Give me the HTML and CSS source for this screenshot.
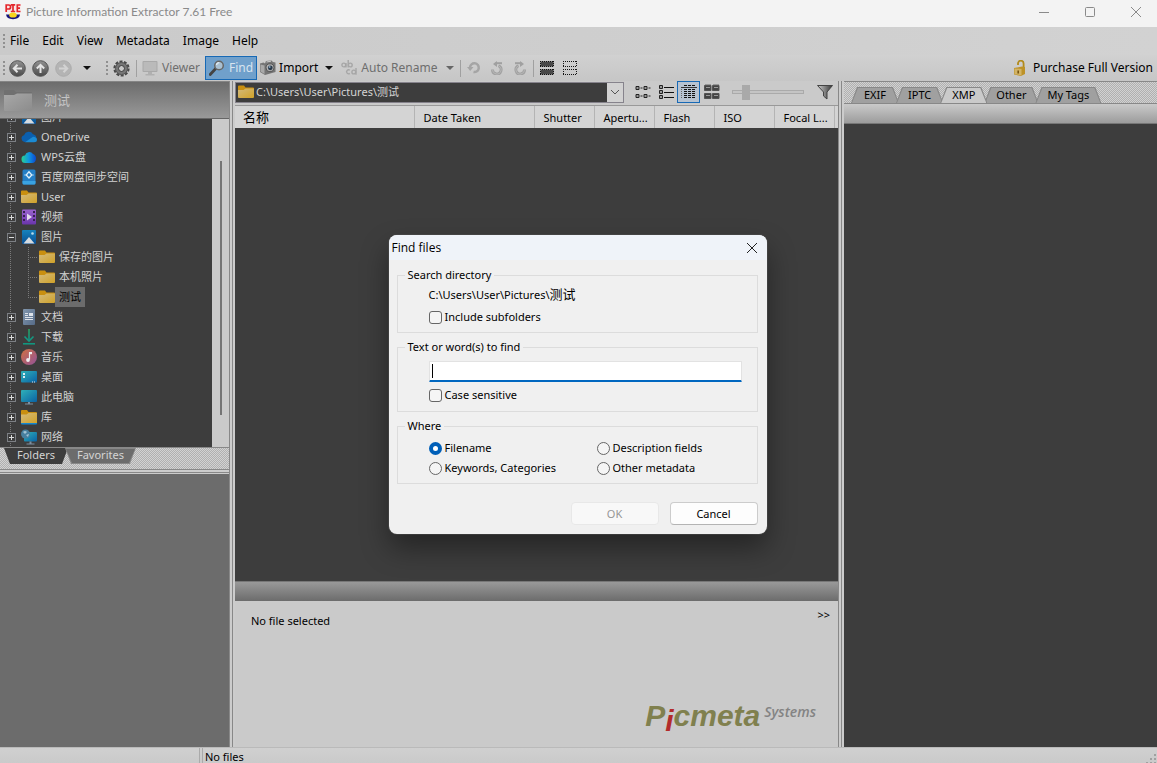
FILE: index.html
```html
<!DOCTYPE html>
<html lang="en">
<head>
<meta charset="utf-8">
<title>Picture Information Extractor</title>
<link rel="stylesheet" href="styles.css">
</head>
<body>
<svg class="defs" width="0" height="0" aria-hidden="true">
  <defs>
    <linearGradient id="gFolder" x1="0" y1="0" x2="1" y2="1"><stop offset="0" stop-color="#d3ba7c"/><stop offset="1" stop-color="#d1a228"/></linearGradient>
    <linearGradient id="gGrey" x1="0" y1="0" x2="1" y2="1"><stop offset="0" stop-color="#a8a8a8"/><stop offset="1" stop-color="#8c8c8c"/></linearGradient>
    <linearGradient id="gScreen" x1="0" y1="0" x2="1" y2="1"><stop offset="0" stop-color="#2fb0b8"/><stop offset="1" stop-color="#0a62a5"/></linearGradient>
    <linearGradient id="gPic" x1="0" y1="0" x2="0" y2="1"><stop offset="0" stop-color="#1683bd"/><stop offset="1" stop-color="#0a4f93"/></linearGradient>
    <linearGradient id="gVid" x1="0" y1="0" x2="0" y2="1"><stop offset="0" stop-color="#9a63cf"/><stop offset="1" stop-color="#6a35ac"/></linearGradient>
    <linearGradient id="gMus" x1="0" y1="0" x2="1" y2="1"><stop offset="0" stop-color="#d1713f"/><stop offset="1" stop-color="#92529a"/></linearGradient>
    <linearGradient id="gDoc" x1="0" y1="0" x2="1" y2="1"><stop offset="0" stop-color="#8297ae"/><stop offset="1" stop-color="#566b88"/></linearGradient>
    <linearGradient id="gDl" x1="0" y1="0" x2="0" y2="1"><stop offset="0" stop-color="#2ba35f"/><stop offset="1" stop-color="#0e9387"/></linearGradient>
    <linearGradient id="gWps" x1="0" y1="0" x2="1" y2="0"><stop offset="0" stop-color="#29d192"/><stop offset=".5" stop-color="#1097e0"/><stop offset="1" stop-color="#0b48cf"/></linearGradient>
    <linearGradient id="gBall" x1="0" y1="0" x2="0" y2="1"><stop offset="0" stop-color="#929292"/><stop offset="1" stop-color="#4a4a4a"/></linearGradient>
    <linearGradient id="gFun" x1="0" y1="0" x2="1" y2="0"><stop offset="0" stop-color="#d0d0d0"/><stop offset="1" stop-color="#333"/></linearGradient>
    <symbol id="folder" viewBox="0 0 16 16"><path d="M0 2.500Q0 1.500 1 1.500h5l1.500 2H15q1 0 1 1V9H0z" fill="#c98f10"/><path d="M0 6h5.500l2-1.500H16V13q0 1-1 1H1q-1 0-1-1z" fill="url(#gFolder)"/></symbol>
    <symbol id="pictures" viewBox="0 0 16 16"><rect x="1" y="1" width="14" height="14" rx="1" fill="url(#gPic)"/><path d="M2.500 14.500L8 8l5.500 6.500z" fill="#d6dbe0"/><circle cx="11.500" cy="4.500" r="1.300" fill="#b9dcea"/></symbol>
    <symbol id="plus" viewBox="0 0 9 9"><rect x=".5" y=".5" width="8" height="8" fill="#3d3d3d" stroke="#7c7f84"/><path d="M2 4.500h5M4.500 2v5" stroke="#dcdcdc"/></symbol>
    <symbol id="minus" viewBox="0 0 9 9"><rect x=".5" y=".5" width="8" height="8" fill="#3d3d3d" stroke="#7c7f84"/><path d="M2 4.500h5" stroke="#dcdcdc"/></symbol>
    <symbol id="rotate" viewBox="0 0 14 14"><path d="M2.500 8.500A4.300 4.300 0 1 0 8.500 4.800" fill="none" stroke="#a0a0a0" stroke-width="2.800"/><path d="M2.500 8.500A4.300 4.300 0 1 0 8.500 4.800" fill="none" stroke="#b8b8b8"/><path d="M5.500 2.200H12" stroke="#a0a0a0" stroke-width="2"/><path d="M7 0v6L3 3z" fill="#a0a0a0"/></symbol>
  </defs>
</svg>

<header class="titlebar">
  <svg class="app-logo" viewBox="0 0 16 16"><rect width="16" height="8" y="0" fill="#f8e8e8"/><path d="M1.200 8V1h2.400a2 2 0 0 1 0 4H1.500M8 0v8M5.800.8h4.400M5.800 7.500h4.400M15.500 1h-3.200v6.500h3.200M12 4.200h3" fill="none" stroke="#e3262b" stroke-width="1.700"/><path d="M1 10.500h14q-.5 4.500-7 4.700Q1.500 15 1 10.500z" fill="#14147c"/><ellipse cx="8" cy="11" rx="3.800" ry="2.600" fill="#f7d51c"/></svg>
  <h1>Picture Information Extractor 7.61 Free</h1>
  <div class="window-buttons">
    <button aria-label="Minimize"><svg viewBox="0 0 12 12"><path d="M1 6.500h10"/></svg></button>
    <button aria-label="Maximize"><svg viewBox="0 0 12 12"><rect x="1.500" y="1.500" width="9" height="9" rx="1"/></svg></button>
    <button aria-label="Close"><svg viewBox="0 0 12 12"><path d="M1 1l10 10M11 1L1 11"/></svg></button>
  </div>
</header>

<nav class="menubar"><span class="grip"></span>
  <button>File</button><button>Edit</button><button>View</button><button>Metadata</button><button>Image</button><button>Help</button>
</nav>

<div class="toolbar">
  <div class="band nav-band"><span class="grip"></span>
    <button aria-label="Back"><svg class="i17" viewBox="0 0 17 17"><circle cx="8.500" cy="8.500" r="7.800" fill="url(#gBall)" stroke="#555"/><path d="M13 8.500H5M8.500 4.800L4.800 8.500l3.700 3.700" fill="none" stroke="#e4e4e4" stroke-width="2"/></svg></button>
    <button aria-label="Up"><svg class="i17" viewBox="0 0 17 17"><circle cx="8.500" cy="8.500" r="7.800" fill="url(#gBall)" stroke="#555"/><path d="M8.500 13V5M4.800 8.500l3.700-3.700 3.700 3.700" fill="none" stroke="#e4e4e4" stroke-width="2"/></svg></button>
    <button aria-label="Forward" disabled><svg class="i17" viewBox="0 0 17 17"><circle cx="8.500" cy="8.500" r="7.800" fill="#b4b4b4" stroke="#acacac"/><path d="M4 8.500h8M8.500 4.800l3.700 3.700-3.700 3.700" fill="none" stroke="#d2d2d2" stroke-width="2"/></svg></button>
    <button aria-label="History"><span class="caret"></span></button>
  </div>
  <div class="band"><span class="grip"></span>
    <button class="gear" aria-label="Options"><svg class="i17" viewBox="0 0 17 17"><circle cx="8.500" cy="8.500" r="6.900" fill="none" stroke="#484848" stroke-width="2.400" stroke-dasharray="2.900 1.440"/><circle cx="8.500" cy="8.500" r="4.700" fill="none" stroke="#777" stroke-width="3.200"/><circle cx="8.500" cy="8.500" r="6" fill="none" stroke="#555"/><circle cx="8.500" cy="8.500" r="3" fill="#c8c8c8" stroke="#333"/></svg></button>
    <span class="sep"></span>
    <button class="tool viewer" disabled><svg class="i16" viewBox="0 0 16 16"><rect x=".5" y="1" width="15" height="11" rx="1" fill="#a9a9a9"/><rect x="1.500" y="2" width="13" height="9" fill="#bababa"/><path d="M6 12h4v2h2.500v1.500h-9V14H6z" fill="#b0b0b0"/></svg>Viewer</button>
    <button class="tool find"><svg class="i16" viewBox="0 0 16 16"><path d="M1.200 14.500L7 8.200" stroke="#444" stroke-width="2.800" stroke-linecap="round"/><circle cx="10" cy="5.500" r="4.300" fill="#a9c0d2" stroke="#666" stroke-width="1.500"/><path d="M7.500 5a2.800 2.800 0 0 1 2.800-2.300" fill="none" stroke="#e4edf4" stroke-width="1.200"/></svg>Find</button>
    <button class="tool import"><svg class="i16" viewBox="0 0 16 16"><path d="M0 3.500l3.500-1L5 3.500l1-2.500 5.500-.5L13 2l2.500.5V12L5 15l-5-3z" fill="#757575"/><path d="M.5 4.500v7l4 2.500V5.500z" fill="#a9a9a9"/><path d="M6.500 2l4.500-.8" stroke="#ccc"/><circle cx="10" cy="7.800" r="4" fill="#b4b4b4" stroke="#555"/><circle cx="10.300" cy="7.800" r="2.400" fill="#2a3a4b"/><circle cx="9.600" cy="7" r="1" fill="#83a0ba"/></svg>Import<span class="caret"></span></button>
    <button class="tool rename" disabled><svg class="i16" viewBox="0 0 16 16" fill="none" stroke="#a6a6a6" stroke-width="1.400"><circle cx="2.800" cy="5" r="1.900"/><path d="M5 3v4.500M7.200 0v7.500"/><circle cx="9.300" cy="5" r="1.900"/><path d="M8.800 10.200a2 2 0 1 0 0 3.200M15 8v6.800"/><circle cx="12.800" cy="12" r="1.900"/></svg>Auto Rename<span class="caret dim"></span></button>
    <span class="sep spaced"></span>
    <button class="sq" aria-label="Refresh" disabled><svg class="i14" viewBox="0 0 14 14"><path d="M3 6.500A4.400 4.400 0 1 1 6.500 11" fill="none" stroke="#a5a5a5" stroke-width="2.500"/><path d="M0 6h6.500L3.200 10z" fill="#a5a5a5"/></svg></button>
    <button class="sq" aria-label="Rotate left" disabled><svg class="i14"><use href="#rotate"/></svg></button>
    <button class="sq" aria-label="Rotate right" disabled><svg class="i14"><g transform="translate(14 0) scale(-1 1)"><use href="#rotate"/></g></svg></button>
    <span class="sep spaced"></span>
    <button class="sq" aria-label="Select all"><svg class="i14" viewBox="0 0 14 14"><path fill="#484848" d="M.5.500h13v5H.5zM.5 8.500h13v5H.5z"/><path fill="none" stroke="#111" stroke-dasharray="1 1" d="M0 .5h14M0 5.500h14M0 8.500h14M0 13.500h14M.5 0v6M13.500 0v6M.5 8v6M13.500 8v6"/></svg></button>
    <button class="sq" aria-label="Select none"><svg class="i14" viewBox="0 0 14 14"><path fill="none" stroke="#111" stroke-dasharray="1 1" d="M0 .5h14M0 5.500h14M0 8.500h14M0 13.500h14M.5 0v6M13.500 0v6M.5 8v6M13.500 8v6"/></svg></button>
  </div>
  <a class="purchase" href="#"><svg class="i16" viewBox="0 0 16 16"><path d="M6 5V3.500a2.800 2.800 0 0 1 5.600 0V8" fill="none" stroke="#b28b1c" stroke-width="1.800"/><path d="M2 8l8-1.500 3 .5v7l-4 2-7-1.500z" fill="#bd9228"/><path d="M2.500 8.500L9.500 9v6.500l-7-1.500z" fill="#d2b366"/><path d="M6.200 10.500v3" stroke="#765511" stroke-width="1.600"/></svg>Purchase Full Version</a>
</div>

<main class="workspace">
  <aside class="left">
    <div class="folder-title"><svg viewBox="0 0 28 22"><path d="M0 2q0-1 1-1h9l2 2h15q1 0 1 1v8H0z" fill="#707070"/><path d="M0 6h10l3-1.500h15V21q0 1-1 1H1q-1 0-1-1z" fill="url(#gGrey)"/></svg><h2>测试</h2></div>
    <div class="tree-wrap">
      <ul class="tree">
        <li><svg class="box"><use href="#plus"/></svg><svg class="i16"><use href="#pictures"/></svg><span>图片</span></li>
        <li><svg class="box"><use href="#plus"/></svg><svg class="i16" viewBox="0 0 16 16"><path d="M3.500 13a3.500 3.500 0 0 1-.5-6.800 5 5 0 0 1 9-1 4 4 0 0 1 .5 7.800z" fill="#0b5fae"/><path d="M4 13.200l8-5.500q4 .3 4 3 0 2.500-3 2.500z" fill="#1b8bd4"/></svg><span>OneDrive</span></li>
        <li><svg class="box"><use href="#plus"/></svg><svg class="i16" viewBox="0 0 16 16"><path d="M4.500 14A3.600 3.600 0 0 1 4 6.500 4.500 4.500 0 0 1 12 5q3.300 1.300 3 5-.5 4-4 4z" fill="url(#gWps)"/></svg><span>WPS云盘</span></li>
        <li><svg class="box"><use href="#plus"/></svg><svg class="i16" viewBox="0 0 16 16"><rect x="1.500" y=".5" width="13" height="15" rx="1.500" fill="#247fc6"/><path d="M1.500 12h13v2q0 1.500-1.500 1.500H3q-1.500 0-1.500-1.500z" fill="#3aa3e2"/><path d="M8 2.800L5.200 6 8 9l2.800-3z" fill="none" stroke="#dff1fb" stroke-width="1.300"/><path d="M4 5.500v1M12 5.500v1" stroke="#fff"/></svg><span>百度网盘同步空间</span></li>
        <li><svg class="box"><use href="#plus"/></svg><svg class="i16"><use href="#folder"/></svg><span>User</span></li>
        <li><svg class="box"><use href="#plus"/></svg><svg class="i16" viewBox="0 0 16 16"><rect x="1" y=".5" width="14" height="15" rx="1" fill="url(#gVid)"/><path d="M3 2v12M13 2v12" stroke="#382053" stroke-width="2" stroke-dasharray="2 2"/><path d="M6 4.500l5 3.500-5 3.500z" fill="#e3dced"/></svg><span>视频</span></li>
        <li><svg class="box"><use href="#minus"/></svg><svg class="i16"><use href="#pictures"/></svg><span>图片</span></li>
        <li class="child"><svg class="i16"><use href="#folder"/></svg><span>保存的图片</span></li>
        <li class="child"><svg class="i16"><use href="#folder"/></svg><span>本机照片</span></li>
        <li class="child last"><svg class="i16"><use href="#folder"/></svg><span class="selected">测试</span></li>
        <li><svg class="box"><use href="#plus"/></svg><svg class="i16" viewBox="0 0 16 16"><rect x="2" y="0" width="12" height="16" rx="1" fill="url(#gDoc)"/><path d="M4 4.500h3M4 6.500h3M4 8.500h8M4 10.500h8" stroke="#dfe4ea"/><rect x="8" y="4" width="4" height="3" fill="#dfe4ea"/></svg><span>文档</span></li>
        <li><svg class="box"><use href="#plus"/></svg><svg class="i16" viewBox="0 0 16 16"><path d="M3.500 7.500L8 12l4.500-4.500" fill="none" stroke="#159881" stroke-width="1.600"/><path d="M7.200 0h1.600v11H7.200z" fill="url(#gDl)"/><path d="M2 14h12v1.600H2z" fill="#12967f"/></svg><span>下载</span></li>
        <li><svg class="box"><use href="#plus"/></svg><svg class="i16" viewBox="0 0 16 16"><circle cx="8" cy="8" r="8" fill="url(#gMus)"/><path d="M8.500 3.500v7" stroke="#eee" stroke-width="1.200"/><circle cx="7" cy="11" r="1.900" fill="#eee"/><path d="M8 3h3v2.200H8z" fill="#eee"/></svg><span>音乐</span></li>
        <li><svg class="box"><use href="#plus"/></svg><svg class="i16" viewBox="0 0 16 16"><rect y="2" width="16" height="11.500" rx="1" fill="url(#gScreen)"/><path d="M2 4h2v2H2zM2 7h2v2H2z" fill="#dcecf0"/><path d="M11 13h1M13 13h1" stroke="#e6e6e6"/></svg><span>桌面</span></li>
        <li><svg class="box"><use href="#plus"/></svg><svg class="i16" viewBox="0 0 16 16"><rect y="1" width="16" height="12" rx="1" fill="url(#gScreen)"/><path d="M7 13h2v1.500h3v1H4v-1h3z" fill="#7d90a2"/></svg><span>此电脑</span></li>
        <li><svg class="box"><use href="#plus"/></svg><svg class="i16" viewBox="0 0 16 16"><rect y="8" width="16" height="7.500" rx="1" fill="#1487d0"/><path d="M0 2q0-1 1-1h5l1.500 2H15q1 0 1 1v5H0z" fill="#c98f10"/><path d="M0 5.500h5.500L7.500 4H16v10H0z" fill="url(#gFolder)"/></svg><span>库</span></li>
        <li><svg class="box"><use href="#plus"/></svg><svg class="i16" viewBox="0 0 16 16"><rect x="3" y="3" width="13" height="9.500" rx="1" fill="url(#gScreen)"/><circle cx="4.500" cy="5" r="4.500" fill="#477f9f"/><path d="M2 3q2-2 4 0L4 5zM5 6l3-1-1 3z" fill="#a2c4d5"/><path d="M8.500 12.500h2V14.500h3v1h-8v-1h3z" fill="#7d90a2"/></svg><span>网络</span></li>
      </ul>
      <div class="scrollbar"><span></span></div>
    </div>
    <div class="tabs-bottom"><button class="active">Folders</button><button>Favorites</button></div>
    <div class="hsplit"></div>
    <div class="preview"></div>
  </aside>
  <div class="vsplit"></div>

  <section class="center">
    <div class="address-row">
      <div class="address"><svg class="i16"><use href="#folder"/></svg><span>C:\Users\User\Pictures\测试</span><button aria-label="Show history"><svg viewBox="0 0 10 6"><path d="M1 1l4 4 4-4" fill="none" stroke="#555"/></svg></button></div>
      <div class="views">
        <button aria-label="Icons"><svg class="i16" viewBox="0 0 16 16"><path d="M1 2.500h3v3H1zM9 2.500h3v3H9zM1 10.500h3v3H1zM9 10.500h3v3H9z" fill="#999" stroke="#222"/><path d="M5.500 4h2M13.500 4h2M5.500 12h2M13.500 12h2" stroke="#222"/></svg></button>
        <button aria-label="List"><svg class="i16" viewBox="0 0 16 16"><path d="M1.500 1.500h3v3h-3zM1.500 6.500h3v3h-3zM1.500 11.500h3v3h-3z" fill="#999" stroke="#222"/><path d="M6 3.500h10M6 8.500h10M6 13.500h10" stroke="#111"/></svg></button>
        <button class="on" aria-label="Details"><svg class="i16" viewBox="0 0 16 16"><path d="M3 1.500h12" stroke="#111" stroke-dasharray="3 1"/><path d="M0 3.500h16" stroke="#333"/><path d="M3 5.500h12M3 7.500h12M3 9.500h12M3 11.500h12M3 13.500h12" stroke="#111" stroke-dasharray="3 1"/><path d="M.5 5v10" stroke="#666" stroke-dasharray="1 1"/></svg></button>
        <button aria-label="Thumbnails"><svg class="i16" viewBox="0 0 16 16"><path d="M.5 1.500h6.500v5H.5zM8.500 1.500H15v5H8.500zM.5 9.500h6.500v5H.5zM8.500 9.500H15v5H8.500z" fill="#444" stroke="#555"/><path d="M1 .5h6M9 .5h6M2 3.500h4M10 3.500h4M2 11.500h4M10 11.500h4" stroke="#999"/></svg></button>
      </div>
      <input class="size-slider" type="range" min="0" max="100" value="14" disabled aria-label="Thumbnail size">
      <button class="filter" aria-label="Filter"><svg class="i16" viewBox="0 0 16 16"><path d="M.5 1.500h15L10 8v7L6.500 12V8z" fill="url(#gFun)" stroke="#444"/></svg></button>
    </div>
    <table class="columns">
      <colgroup><col class="w180"><col class="w120"><col class="w60"><col class="w60"><col class="w60"><col class="w60"><col class="w60"><col></colgroup>
      <thead><tr><th class="cn">名称</th><th>Date Taken</th><th>Shutter</th><th>Apertu...</th><th>Flash</th><th>ISO</th><th>Focal L...</th><td></td></tr></thead>
    </table>
    <div class="filelist"></div>
    <div class="info-bar"></div>
    <div class="info">
      <div class="info-head"><p>No file selected</p><button>&gt;&gt;</button></div>
      <div class="brand"><span class="pic">P<span class="dot-i">i</span>cmeta</span><span class="sys">Systems</span></div>
    </div>
  </section>
  <div class="vsplit"></div>

  <aside class="right">
    <div class="tabs-top"><button>EXIF</button><button>IPTC</button><button class="active">XMP</button><button>Other</button><button>My Tags</button></div>
    <div class="tab-bar"></div>
    <div class="tag-panel"></div>
  </aside>
</main>

<footer class="statusbar"><div class="st-left"></div><div class="st-main">No files</div><svg class="size-grip" viewBox="0 0 12 12"><path d="M9 1h2v2H9zM5 5h2v2H5zM9 5h2v2H9zM1 9h2v2H1zM5 9h2v2H5zM9 9h2v2H9z" fill="#a0a0a0"/></svg></footer>

<form class="dialog" role="dialog" aria-label="Find files">
  <div class="dialog-title"><h2>Find files</h2><button type="button" aria-label="Close dialog"><svg viewBox="0 0 12 12"><path d="M1 1l10 10M11 1L1 11"/></svg></button></div>
  <div class="dialog-body">
    <fieldset><legend>Search directory</legend>
      <p class="path">C:\Users\User\Pictures\<span>测试</span></p>
      <label class="row"><input type="checkbox">Include subfolders</label>
    </fieldset>
    <fieldset class="tall"><legend>Text or word(s) to find</legend>
      <div class="entry"><input type="text" aria-label="Text or word(s) to find"><span class="cursor"></span></div>
      <label class="row"><input type="checkbox">Case sensitive</label>
    </fieldset>
    <fieldset><legend>Where</legend>
      <div class="radios">
        <label><input type="radio" name="where" checked>Filename</label>
        <label><input type="radio" name="where">Description fields</label>
        <label><input type="radio" name="where">Keywords, Categories</label>
        <label><input type="radio" name="where">Other metadata</label>
      </div>
    </fieldset>
    <div class="actions"><button type="submit" disabled>OK</button><button type="button">Cancel</button></div>
  </div>
</form>
</body>
</html>
```

FILE: styles.css
```css
* { box-sizing: border-box; }
html, body { height: 100%; }
body {
  margin: 0;
  display: flex;
  flex-direction: column;
  position: relative;
  overflow: hidden;
  background: #cacaca;
  color: #000;
  font: 11px/16px "Noto Sans", "Noto Sans CJK SC", sans-serif;
}
button { border: 0; padding: 0; background: none; font: inherit; color: inherit; }
h1, h2, p, ul { margin: 0; padding: 0; font-size: inherit; font-weight: normal; }
svg { display: block; flex: none; }
.defs { position: absolute; }
.i14 { width: 14px; height: 14px; }
.i16 { width: 16px; height: 16px; }
.i17 { width: 17px; height: 17px; }

.titlebar { height: 27px; flex: none; display: flex; align-items: center; padding: 0 0 3px 5px; gap: 5px; background: #f3f3f3; color: #8a8a8a; }
.titlebar h1 { flex: 1; font: 12px/16px Lato, sans-serif; }
.app-logo { width: 16px; height: 16px; }
.window-buttons { display: flex; gap: 4px; }
.window-buttons button { width: 42px; display: flex; justify-content: center; }
.window-buttons svg { width: 12px; height: 12px; fill: none; stroke: #8a8a8a; }

.menubar { height: 28px; flex: none; display: flex; align-items: center; gap: 13px; padding-left: 3px; background: linear-gradient(90deg, #cacaca, #d2d2d2); font-size: 12px; }
.grip { width: 2px; height: 15px; flex: none; background: repeating-linear-gradient(#909090 0 2px, transparent 2px 4px); }
.menubar .grip { margin-right: -8px; }

.toolbar { height: 26px; flex: none; display: flex; align-items: center; background: linear-gradient(#d1d1d1, #c6c6c6); font-size: 12px; }
.band { display: flex; align-items: center; height: 26px; }
.nav-band { width: 101px; margin-right: 5px; padding-left: 3px; gap: 6px; }
.nav-band .grip { margin-right: -2px; }
.nav-band .caret { margin-left: 5px; }
.caret { width: 0; flex: none; display: block; border: 4px solid transparent; border-top-color: #111; border-bottom: 0; }
.dim { border-top-color: #666; }
.gear { padding: 0 6px 0 5px; }
.sep { width: 1px; height: 17px; background: #a0a0a0; flex: none; }
.spaced { margin: 0 2px 0 1px; }
.tool { height: 24px; display: flex; align-items: center; gap: 4px; padding: 0 5px; white-space: nowrap; }
.tool:disabled { color: #6e6e6e; }
.tool.find { background: #70a0cb; border: 1px solid #1769b5; color: #d8e4ef; padding: 0 3px; }
.tool.import { gap: 3px; padding: 0 3px; }
.tool .caret { margin-left: 4px; }
.sq { width: 23px; height: 24px; display: flex; align-items: center; justify-content: center; }
.purchase { margin-left: auto; padding-right: 4px; display: flex; align-items: center; gap: 5px; color: #000; text-decoration: none; }

.workspace { flex: 1; min-height: 0; display: grid; grid-template-columns: 229px 6px minmax(0, 603fr) 6px minmax(0, 313fr); }
.vsplit { background: linear-gradient(90deg, #888 0 1px, #ccc 1px 3px, #888 3px 4px, #ccc 4px); }
.left, .center, .right { min-width: 0; min-height: 0; display: flex; flex-direction: column; }

.folder-title { height: 38px; flex: none; display: flex; align-items: center; gap: 12px; padding-left: 4px; background: linear-gradient(#6c6c6c, #999); border-top: 1px solid #858585; border-bottom: 1px solid #666; color: #c4c4c4; }
.folder-title svg { width: 28px; height: 22px; }
.folder-title h2 { font-size: 13px; }
.tree-wrap { height: 328px; flex: none; display: flex; background: #3d3d3d; }
.tree { flex: 1; display: flex; flex-direction: column; justify-content: flex-end; overflow: hidden; list-style: none; color: #d2d2d2; background: repeating-linear-gradient(#7a7a7a 0 1px, transparent 1px 2px) 10px 0 / 1px 100% no-repeat; }
.tree li { height: 20px; flex: none; display: flex; align-items: center; padding-left: 7px; }
.tree .box { width: 9px; height: 9px; margin-right: 5px; }
.tree li > span { padding: 2px 4px; white-space: nowrap; }
.tree .child { padding-left: 39px; background: repeating-linear-gradient(#7a7a7a 0 1px, transparent 1px 2px) 28px 0 / 1px 100% no-repeat, repeating-linear-gradient(90deg, #7a7a7a 0 1px, transparent 1px 2px) 28px 10px / 10px 1px no-repeat; }
.tree .last { background-size: 1px 10px, 10px 1px; }
.tree .selected { background: #6c6c6c; color: #000; }
.scrollbar { width: 17px; background: #cacaca; display: flex; justify-content: center; padding: 42px 0 32px; }
.scrollbar span { width: 2px; background: #757575; }

.tabs-bottom, .tabs-top { flex: none; height: 22px; display: flex; background: repeating-conic-gradient(#b0b0b0 0 25%, #d2d2d2 0 50%) 0 0 / 2px 2px; }
.tabs-bottom { border-top: 1px solid #888; padding-left: 4px; align-items: flex-start; color: #d4d4d4; }
.tabs-bottom button, .tabs-top button { position: relative; z-index: 0; height: 16px; padding: 0 13px; line-height: 16px; background: #888; white-space: nowrap; }
.tabs-bottom button { line-height: 14px; padding-bottom: 2px; clip-path: polygon(0 0, 100% 0, calc(100% - 6px) 100%, 6px 100%); }
.tabs-bottom button + button { margin-left: -3px; padding: 0 12px 2px; }
.tabs-bottom button::before, .tabs-top button::before { content: ""; position: absolute; z-index: -1; inset: 1px; background: #6c6c6c; clip-path: polygon(0 0, 100% 0, calc(100% - 6px) 100%, 6px 100%); }
.tabs-bottom .active, .tabs-bottom .active::before { background: #3d3d3d; }
.hsplit { height: 5px; flex: none; background: linear-gradient(#888 0 1px, #ccc 1px 3px, #888 3px 4px, #ccc 4px); }
.preview { flex: 1; background: #6c6c6c; }

.address-row { height: 25px; flex: none; display: flex; align-items: center; padding-bottom: 2px; border-bottom: 1px solid #999; }
.address { flex: 1; max-width: 389px; height: 21px; display: flex; align-items: center; padding-left: 2px; gap: 2px; background: #3d3d3d; border: 1px solid #86838c; color: #d4d4d4; }
.address span { flex: 1; white-space: nowrap; }
.address button { width: 16px; height: 19px; background: #d2d2d2; display: flex; align-items: center; justify-content: center; }
.address button svg { width: 10px; height: 6px; }
.views { display: flex; margin-left: 7px; }
.views button { width: 23px; height: 22px; display: flex; align-items: center; justify-content: center; }
.views .on { background: #b7c3d1; border: 1px solid #1769b5; }
.size-slider { appearance: none; width: 72px; height: 16px; margin: 0 0 0 9px; background: linear-gradient(#aaa, #aaa) 0 6px / 100% 4px no-repeat; }
.size-slider::-webkit-slider-runnable-track { height: 4px; border: 1px solid #aaa; background: #c4c4c4; }
.size-slider::-webkit-slider-thumb { appearance: none; width: 8px; height: 15px; margin-top: -6px; background: #a9a9a9; }
.filter { margin: 0 5px 0 auto; }

.columns { width: 100%; height: 22px; flex: none; table-layout: fixed; border-collapse: collapse; background: #d4d4d4; }
.columns th { height: 22px; padding: 1px 0 0 9px; border-right: 1px solid #b4b4b4; font-weight: normal; text-align: left; white-space: nowrap; }
.columns td { padding: 0; }
.columns .cn { padding: 0 0 1px 8px; font-size: 13px; }
.w180 { width: 179px; }
.w120 { width: 120px; }
.w60 { width: 60px; }
.filelist { flex: 1; background: #3d3d3d; }
.info-bar { height: 20px; flex: none; background: linear-gradient(#999, #6c6c6c); border-top: 1px solid #777; }
.info { height: 146px; flex: none; padding: 6px 8px 14px 16px; display: flex; flex-direction: column; justify-content: space-between; background: #cacaca; }
.info-head { display: flex; justify-content: space-between; align-items: flex-start; }
.info-head p { padding-top: 6px; }
.brand { align-self: flex-end; display: flex; gap: 4px; padding-right: 14px; }
.pic { font: italic bold 30px/34px "Liberation Sans", sans-serif; color: #80804e; }
.dot-i { position: relative; top: 5px; color: #b32b2b; }
.sys { font: italic 600 14px/26px "Open Sans", sans-serif; color: #838383; }

.tabs-top { height: 23px; align-items: flex-end; padding-left: 7px; border-top: 1px solid #888; border-bottom: 1px solid #888; }
.tabs-top button { clip-path: polygon(6px 0, calc(100% - 6px) 0, 100% 100%, 0 100%); }
.tabs-top button + button { margin-left: -3px; padding: 0 12px; }
.tabs-top button::before { background: #a0a0a0; inset: 1px 1px 0; clip-path: polygon(6px 0, calc(100% - 6px) 0, 100% 100%, 0 100%); }
.tabs-top .active { z-index: 1; }
.tabs-top .active::before { background: #cacaca; }
.tab-bar { height: 20px; flex: none; background: linear-gradient(#cacaca, #9c9c9c); border-bottom: 1px solid #777; }
.tag-panel { flex: 1; background: #3d3d3d; }

.statusbar { height: 16px; flex: none; display: grid; grid-template-columns: 200px 1fr 12px; column-gap: 2px; background: linear-gradient(#d0d0d0, #cacaca); border-top: 1px solid #bababa; }
.st-left { border-right: 1px solid #aaa; }
.st-main { border-left: 1px solid #aaa; padding: 1px 0 0 2px; }
.size-grip { width: 12px; height: 12px; align-self: end; }

.dialog { position: absolute; z-index: 5; top: 235px; left: 50%; width: 378px; margin-left: -190px; border-radius: 8px; overflow: hidden; background: #f0f0f0; box-shadow: 0 0 0 1px #5556, 0 14px 28px #0006; }
.dialog-title { height: 25px; display: flex; align-items: center; justify-content: space-between; padding: 0 9px 0 3px; background: #eff3f9; }
.dialog-title h2 { font: 12px/16px "Open Sans", sans-serif; }
.dialog-title svg { width: 12px; height: 12px; stroke: #222; fill: none; }
.dialog-body { padding: 7px 9px 9px 8px; }
fieldset { min-width: 0; height: 66px; margin: 0 0 6px; padding: 0 15px 0 7px; border: 1px solid #dcdcdc; }
legend { padding: 0 3px; line-height: 16px; }
.path { height: 23px; line-height: 22px; padding-left: 24px; }
.path span { font-size: 13px; }
.row { display: flex; align-items: center; gap: 3px; height: 22px; padding-left: 24px; }
.entry { display: flex; position: relative; margin: 6px 0 2px 24px; }
.entry input { flex: 1; min-width: 0; height: 21px; padding: 0 4px; border: 1px solid #e2e2e2; border-bottom: 2px solid #0067c0; border-radius: 1px; background: #fff; font: inherit; outline: 0; }
.cursor { position: absolute; left: 3px; top: 3px; width: 1px; height: 14px; background: #000; }
input[type="checkbox"], input[type="radio"] { appearance: none; flex: none; width: 13px; height: 13px; margin: 0; border: 1px solid #666; background: #f5f5f5; border-radius: 3px; }
input[type="radio"] { border-radius: 50%; }
input[type="radio"]:checked { border: 4px solid #005fb8; background: #fff; }
.tall { height: 73px; }
.radios { display: grid; grid-template-columns: 168px 1fr; padding: 4px 0 0 24px; }
.radios label { display: flex; align-items: center; gap: 3px; height: 20px; white-space: nowrap; }
.actions { display: flex; justify-content: flex-end; gap: 11px; padding-top: 12px; }
.actions button { width: 88px; height: 23px; border: 1px solid #ccc; border-bottom-color: #b4b4b4; border-radius: 4px; background: #fdfdfd; }
.actions button:disabled { border-color: #e8e8e8; background: #f8f8f8; color: #969696; }
```
